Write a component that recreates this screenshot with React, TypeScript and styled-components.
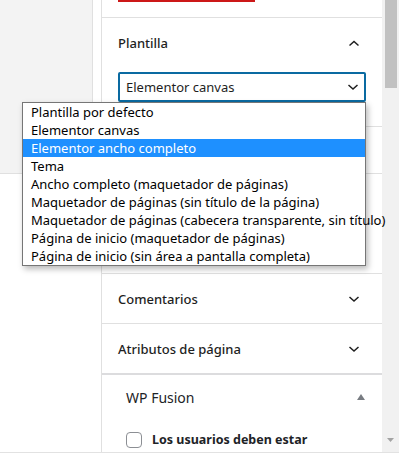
import React from "react";
import styled, { createGlobalStyle } from "styled-components";

const GlobalStyle = createGlobalStyle`
  html, body {
    margin: 0;
    padding: 0;
    background: #ffffff;
  }
  body {
    font-family: "Noto Sans", "Open Sans", sans-serif;
    color: #1e1e1e;
  }
`;

const Frame = styled.div`
  position: relative;
  display: flex;
  height: 452px;
  overflow: hidden;
  border-bottom: 1px solid #e2e2e2;
`;

const Canvas = styled.div`
  flex: none;
  width: 101px;
`;

const CanvasBlock = styled.div`
  width: 93px;
  height: 174px;
  box-sizing: border-box;
  background: #f3f3f3;
  border-right: 1px solid #e0e0e0;
  border-bottom: 1px solid #e0e0e0;
`;

const Sidebar = styled.div`
  flex: none;
  width: 281px;
  box-sizing: border-box;
  border-left: 1px solid #e0e0e0;
  display: flex;
  flex-direction: column;
`;

const TopPanel = styled.div`
  flex: none;
  height: 17px;
  padding: 0 16px;
  border-bottom: 1px solid #e0e0e0;
`;

const DangerBar = styled.div`
  width: 137px;
  height: 2px;
  background: #cc1818;
`;

const Panel = styled.div<{ $h?: number; $thick?: boolean }>`
  flex: none;
  ${({ $h }) => ($h ? `height: ${$h}px;` : "")}
  border-bottom: ${({ $thick }) => ($thick ? "2px solid #dcdcde" : "1px solid #e0e0e0")};
`;

const PanelHeader = styled.div`
  height: 49px;
  padding: 0 16px;
  display: flex;
  align-items: center;
  justify-content: space-between;
  font-size: 13px;
  font-weight: 500;
  color: #1e1e1e;
`;

const PanelBody = styled.div`
  padding: 5px 16px 24px;
`;

const SelectBox = styled.div`
  height: 30px;
  box-sizing: border-box;
  border: 2px solid #0a6aa1;
  border-radius: 2px;
  padding: 0 6px;
  display: flex;
  align-items: center;
  justify-content: space-between;
  font-size: 13px;
  color: #1e1e1e;
`;

const Chevron = styled.svg<{ $shift?: number }>`
  width: 24px;
  height: 24px;
  flex: none;
  margin-right: ${({ $shift }) => $shift ?? 0}px;
`;

const MetaBox = styled.div`
  flex: none;
  padding: 0 17px 0 24px;
`;

const MetaHeader = styled.div`
  height: 44px;
  display: flex;
  align-items: center;
  justify-content: space-between;
  font-size: 14px;
  color: #1d2327;
`;

const CheckRow = styled.label`
  display: flex;
  gap: 10px;
  margin-top: 12px;
  font-size: 12.5px;
  font-weight: 700;
  line-height: 18px;
  color: #1d2327;
`;

const CheckBox = styled.span`
  flex: none;
  width: 16px;
  height: 16px;
  box-sizing: border-box;
  border: 1px solid #8c8f94;
  border-radius: 4px;
  background: #fff;
  margin-top: 1px;
`;

const Scrollbar = styled.div`
  flex: none;
  width: 17px;
  background: #f1f1f1;
  display: flex;
  flex-direction: column;
  justify-content: space-between;
  align-items: center;
`;

const Thumb = styled.div`
  width: 12px;
  height: 88px;
  background: #c1c1c1;
`;

const ArrowDown = styled.svg`
  width: 17px;
  height: 17px;
  margin-bottom: 4px;
`;

const Dropdown = styled.ul`
  position: absolute;
  left: 22px;
  top: 102px;
  width: 344px;
  box-sizing: border-box;
  margin: 0;
  padding: 0;
  list-style: none;
  background: #fff;
  border: 1px solid #767676;
  box-shadow: 2px 3px 6px rgba(0, 0, 0, 0.28);
`;

const Option = styled.li<{ $active?: boolean }>`
  height: 18px;
  line-height: 18px;
  padding: 0 8px;
  font-size: 13px;
  white-space: nowrap;
  color: ${({ $active }) => ($active ? "#fff" : "#000")};
  background: ${({ $active }) => ($active ? "#1e90ff" : "transparent")};
`;

const ChevronUp = () => (
  <Chevron viewBox="0 0 24 24">
    <path d="M7.5 14.5L12 10.5l4.5 4" fill="none" stroke="#1e1e1e" strokeWidth="1.5" />
  </Chevron>
);

const ChevronDown = ({ shift }: { shift?: number }) => (
  <Chevron viewBox="0 0 24 24" $shift={shift}>
    <path d="M7.5 10l4.5 4 4.5-4" fill="none" stroke="#1e1e1e" strokeWidth="1.5" />
  </Chevron>
);

const options = [
  "Plantilla por defecto",
  "Elementor canvas",
  "Elementor ancho completo",
  "Tema",
  "Ancho completo (maquetador de páginas)",
  "Maquetador de páginas (sin título de la página)",
  "Maquetador de páginas (cabecera transparente, sin título)",
  "Página de inicio (maquetador de páginas)",
  "Página de inicio (sin área a pantalla completa)",
];

export default function App() {
  return (
    <>
      <GlobalStyle />
      <Frame>
        <Canvas>
          <CanvasBlock />
        </Canvas>
        <Sidebar>
          <TopPanel>
            <DangerBar />
          </TopPanel>
          <Panel>
            <PanelHeader>
              Plantilla
              <ChevronUp />
            </PanelHeader>
            <PanelBody>
              <SelectBox>
                Elementor canvas
                <ChevronDown shift={-7} />
              </SelectBox>
            </PanelBody>
          </Panel>
          <Panel $h={46} />
          <Panel $h={49} />
          <Panel $h={49} />
          <Panel>
            <PanelHeader>
              Comentarios
              <ChevronDown />
            </PanelHeader>
          </Panel>
          <Panel $thick>
            <PanelHeader>
              Atributos de página
              <ChevronDown />
            </PanelHeader>
          </Panel>
          <MetaBox>
            <MetaHeader>
              WP Fusion
              <svg width="8" height="6" viewBox="0 0 8 6">
                <path d="M0 6L4 0l4 6z" fill="#787c82" />
              </svg>
            </MetaHeader>
            <CheckRow>
              <CheckBox />
              <span>Los usuarios deben estar conectados para acceder al contenido</span>
            </CheckRow>
          </MetaBox>
        </Sidebar>
        <Scrollbar>
          <Thumb />
          <ArrowDown viewBox="0 0 17 17">
            <path d="M5 7h7l-3.5 4z" fill="#a3a3a3" />
          </ArrowDown>
        </Scrollbar>
        <Dropdown>
          {options.map((o, i) => (
            <Option key={o} $active={i === 2}>
              {o}
            </Option>
          ))}
        </Dropdown>
      </Frame>
    </>
  );
}
